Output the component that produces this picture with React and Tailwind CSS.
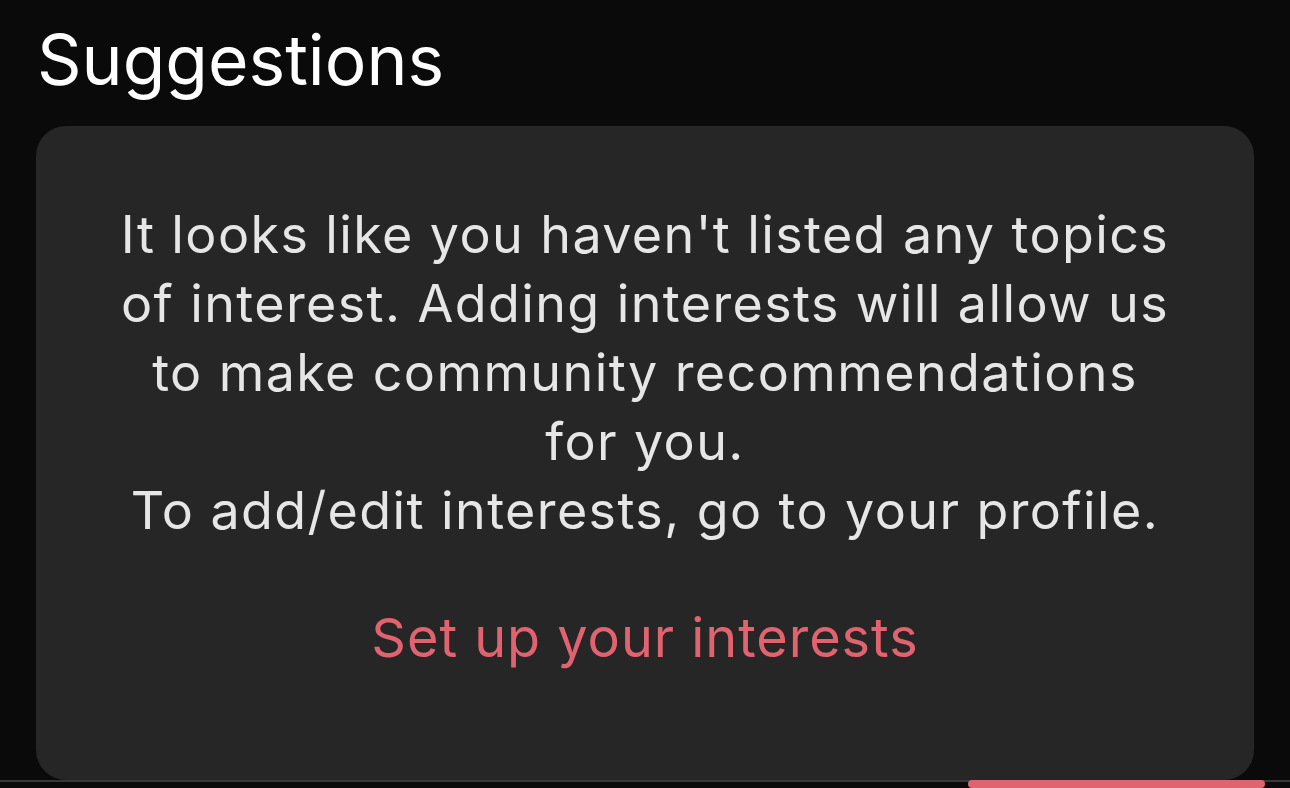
export default function App() {
  return (
    <div
      className="relative w-full h-[788px] bg-[#0a0a0a] overflow-hidden flex flex-col"
      style={{ fontFamily: "Inter, 'Noto Sans', sans-serif" }}
    >
      <div className="h-[126px] pl-[37px] pt-[20px]">
        <h1 className="text-[69.5px] leading-[80px] text-white font-normal">Suggestions</h1>
      </div>
      <div className="mx-[36px] h-[654px] rounded-[30px] bg-[#262626] flex flex-col items-center pt-[74px]">
        <p className="text-center text-[52px] leading-[69px] tracking-[0.027em] text-[#e6e6e6] whitespace-nowrap">
          It looks like you haven't listed any topics
          <br />
          of interest. Adding interests will allow us
          <br />
          to make community recommendations
          <br />
          for you.
          <br />
          To add/edit interests, go to your profile.
        </p>
        <div className="mt-[58px] text-[54px] leading-[69px] tracking-[0.018em] text-[#e0636f]">
          Set up your interests
        </div>
      </div>
      <div className="relative h-[8px]">
        <div className="h-[2px] bg-[#383838]" />
        <div className="absolute left-[968px] top-0 w-[297px] h-[8px] rounded-full bg-[#e0636f]" />
      </div>
    </div>
  );
}
